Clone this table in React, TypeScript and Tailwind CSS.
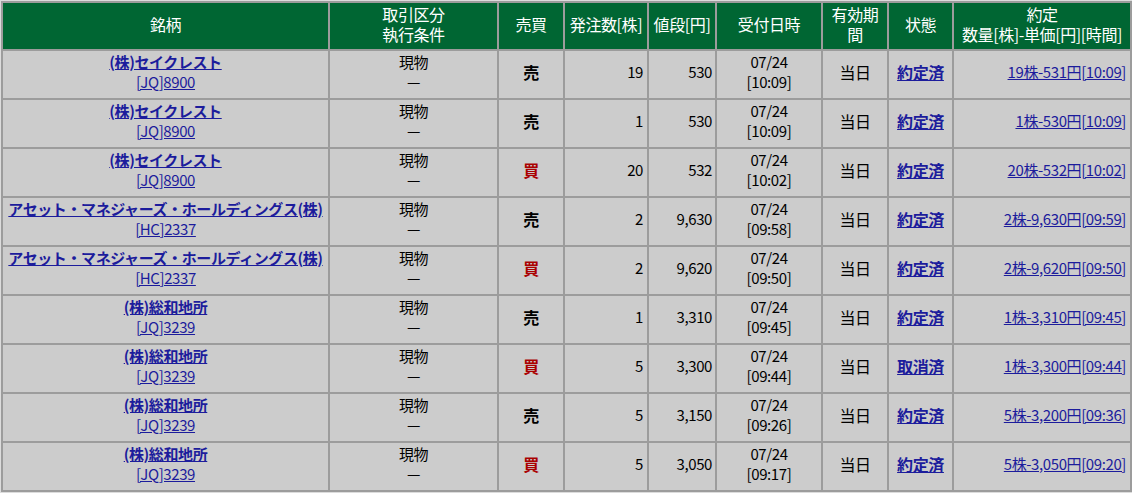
import React from 'react';

type Order = {
  name: string;
  code: string;
  side: '売' | '買';
  qty: string;
  price: string;
  time: string;
  status: string;
  fill: string;
};

const ORDERS: Order[] = [
  { name: '(株)セイクレスト', code: '[JQ]8900', side: '売', qty: '19', price: '530', time: '10:09', status: '約定済', fill: '19株-531円[10:09]' },
  { name: '(株)セイクレスト', code: '[JQ]8900', side: '売', qty: '1', price: '530', time: '10:09', status: '約定済', fill: '1株-530円[10:09]' },
  { name: '(株)セイクレスト', code: '[JQ]8900', side: '買', qty: '20', price: '532', time: '10:02', status: '約定済', fill: '20株-532円[10:02]' },
  { name: 'アセット・マネジャーズ・ホールディングス(株)', code: '[HC]2337', side: '売', qty: '2', price: '9,630', time: '09:58', status: '約定済', fill: '2株-9,630円[09:59]' },
  { name: 'アセット・マネジャーズ・ホールディングス(株)', code: '[HC]2337', side: '買', qty: '2', price: '9,620', time: '09:50', status: '約定済', fill: '2株-9,620円[09:50]' },
  { name: '(株)総和地所', code: '[JQ]3239', side: '売', qty: '1', price: '3,310', time: '09:45', status: '約定済', fill: '1株-3,310円[09:45]' },
  { name: '(株)総和地所', code: '[JQ]3239', side: '買', qty: '5', price: '3,300', time: '09:44', status: '取消済', fill: '1株-3,300円[09:44]' },
  { name: '(株)総和地所', code: '[JQ]3239', side: '売', qty: '5', price: '3,150', time: '09:26', status: '約定済', fill: '5株-3,200円[09:36]' },
  { name: '(株)総和地所', code: '[JQ]3239', side: '買', qty: '5', price: '3,050', time: '09:17', status: '約定済', fill: '5株-3,050円[09:20]' },
];

const font = "font-['Noto_Sans_CJK_JP','Liberation_Sans',sans-serif]";

// header cell, green with white text
const Head: React.FC<{ lines: string[] }> = ({ lines }) => (
  <div className="bg-[#006633] text-white text-[16px] leading-[20px] pb-[4px] flex flex-col items-center justify-center text-center">
    {lines.map(l => (
      <span key={l} className="whitespace-nowrap h-[20px]">{l}</span>
    ))}
  </div>
);

const Cell: React.FC<{ className?: string; children: React.ReactNode }> = ({ className = '', children }) => (
  <div className={`bg-[#cccccc] text-[15px] leading-[20px] pb-[6px] flex flex-col justify-center ${className}`}>{children}</div>
);

export default function App() {
  return (
    <div className={`w-[1132px] h-[493px] bg-[#d6d6d6] ${font} tracking-[-0.4px]`}>
      <div className="border-l border-t border-b border-[#dcdcdc] bg-[#9c9c9c] p-[2px] grid grid-cols-[325px_167px_64px_82px_66px_104px_64px_63px_176px] grid-rows-[46px_repeat(9,47px)] gap-[2px]">
        <Head lines={['銘柄']} />
        <Head lines={['取引区分', '執行条件']} />
        <Head lines={['売買']} />
        <Head lines={['発注数[株]']} />
        <Head lines={['値段[円]']} />
        <Head lines={['受付日時']} />
        <Head lines={['有効期', '間']} />
        <Head lines={['状態']} />
        <Head lines={['約定', '数量[株]-単価[円][時間]']} />

        {ORDERS.map((o, i) => (
          <React.Fragment key={i}>
            <Cell className="items-center text-[#1c1c9c]">
              <span className="font-bold underline whitespace-nowrap">{o.name}</span>
              <span className="underline">{o.code}</span>
            </Cell>
            <Cell className="items-center text-black">
              <span>現物</span>
              <span>—</span>
            </Cell>
            <Cell className={`items-center font-bold text-[16px] ${o.side === '買' ? 'text-[#aa0000]' : 'text-black'}`}>
              <span>{o.side}</span>
            </Cell>
            <Cell className="items-end pr-[4px] text-black">
              <span>{o.qty}</span>
            </Cell>
            <Cell className="items-end pr-[3px] text-black">
              <span>{o.price}</span>
            </Cell>
            <Cell className="items-center text-black">
              <span>07/24</span>
              <span>[{o.time}]</span>
            </Cell>
            <Cell className="items-center text-black text-[16px]">
              <span>当日</span>
            </Cell>
            <Cell className="items-center text-[#1c1c9c] text-[16px]">
              <span className="font-bold underline">{o.status}</span>
            </Cell>
            <Cell className="items-end pr-[4px] text-[#1c1c9c]">
              <span className="underline whitespace-nowrap">{o.fill}</span>
            </Cell>
          </React.Fragment>
        ))}
      </div>
    </div>
  );
}
